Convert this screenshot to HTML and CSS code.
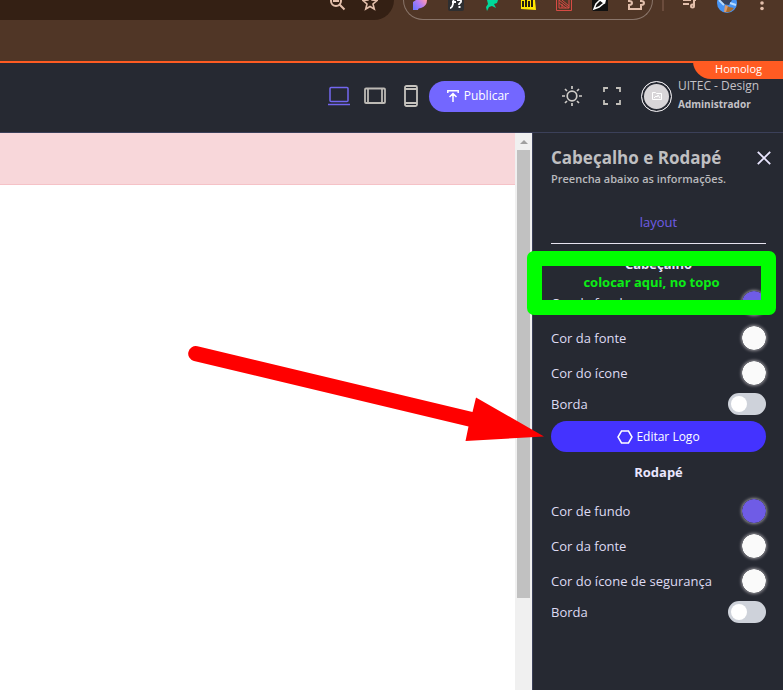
FILE: index.html
```html
<!DOCTYPE html>
<html lang="pt-BR">
<head>
<meta charset="utf-8">
<title>Cabeçalho e Rodapé</title>
<link rel="stylesheet" href="styles.css">
</head>
<body>
<div class="chrome">
  <div class="address">
    <svg width="18" height="20" viewBox="0 0 18 20" fill="none" stroke="#e3bfab" stroke-width="2"><circle cx="7" cy="1" r="5"/><path d="M10 4l5.500 5.500M4 1h6"/></svg>
    <svg width="16" height="20" viewBox="0 0 16 20" fill="none" stroke="#e3bfab" stroke-width="1.600"><path d="M8-5l2 5 5 .5-4 3.500 1.300 5L8 6.500 3.700 9 5 4 1 .5 6 0z"/></svg>
  </div>
  <div class="extensions">
    <svg width="16" height="20" viewBox="0 0 16 20"><defs><linearGradient id="g" gradientUnits="userSpaceOnUse" x1="3" y1="9" x2="14" y2="0"><stop stop-color="#7377ff"/><stop offset=".5" stop-color="#b67df0"/><stop offset="1" stop-color="#ff9ab0"/></linearGradient></defs><path fill="url(#g)" d="M1 10V2l3-2h11q0 6-6 8-3 0-3 2z"/></svg>
    <svg width="16" height="20" viewBox="0 0 16 20"><path fill="#2e2f31" d="M0 0h16v9q0 2-2 2H2q-2 0-2-2z"/><path fill="none" stroke="#fff" stroke-width="1.800" d="M2 8q3 0 3.500-8M4 2h4M9 0h4v2l-2 2v1M10.500 7h2"/></svg>
    <svg width="16" height="20" viewBox="0 0 16 20"><path fill="#00d99a" d="M3 0h11l-1 3-3 1 2 4-4-2-3 1-2 4-1-4 2-3z"/></svg>
    <svg width="16" height="20" viewBox="0 0 16 20"><path fill="#ffe600" d="M1 0h14l1 10-15-1z"/><path stroke="#231d10" stroke-width="2" fill="none" d="M3 1v6M6 0v7M9 1v6M12 0v7"/></svg>
    <svg width="16" height="20" viewBox="0 0 16 20" fill="none" stroke="#d84b44"><path d="M.5 0v10.500h15V0M3 0v8h10V0M3 0l10 8M6 0l7 6M3 3l7 5M6 8V4"/></svg>
    <svg width="16" height="20" viewBox="0 0 16 20"><path fill="#111" d="M0 0h16v11H1l-1-1z"/><path d="M2 9l2-5 4-4 4 3-5 4z" fill="none" stroke="#fff" stroke-width="1.500"/><path d="M8 0l5 4 1-4z" fill="#fff"/></svg>
    <svg width="17" height="20" viewBox="0 0 17 20" fill="none" stroke="#e3bfab" stroke-width="2"><path d="M1 0v1q3 0 3 2T1 5v4h12V5q3 0 3-2t-3-2V0"/></svg>
  </div>
  <span class="divider"></span>
  <div class="browser-tools">
    <svg width="16" height="20" viewBox="0 0 16 20" fill="none" stroke="#e3bfab" stroke-width="2"><path d="M1 0h8M1 4h6M12 6V0h2"/><circle cx="10.500" cy="6" r="1.500"/></svg>
    <svg width="20" height="20" viewBox="0 0 20 20"><circle cx="10" cy="3" r="10" fill="#4794f4"/><path fill="#38435d" d="M3 0h12l-3 5-7-1z"/><path fill="#a96c2b" d="M9 5l3 2 5 1q-3 5-9 4z"/><path fill="#d99b70" d="M8 5l3 1-2 6-2 0z"/><path stroke="#b8dcff" stroke-width="2" d="M2 0l5 5M13 3l6 2"/></svg>
    <svg width="4" height="20" viewBox="0 0 4 20" fill="#e3bfab"><circle cx="2" cy="3" r="1.800"/><circle cx="2" cy="8.500" r="1.800"/></svg>
  </div>
</div>

<header class="topbar">
  <span class="ribbon">Homolog</span>
  <nav class="devices" aria-label="Dispositivo">
    <button class="icon-button" aria-label="Computador"><svg width="22" height="20" viewBox="0 0 22 20" fill="none" stroke="#7367f0" stroke-width="1.500"><rect x="2" y="1.500" width="18" height="14" rx="1"/><path d="M0 18.500h22"/></svg></button>
    <button class="icon-button" aria-label="Tablet"><svg width="22" height="18" viewBox="0 0 22 18" fill="none" stroke="#bdbab5" stroke-width="1.800"><rect x="1" y="1.500" width="20" height="14.500" rx="1"/><path d="M4 1.500v14M18 1.500v14"/></svg></button>
    <button class="icon-button phone" aria-label="Celular"><svg width="14" height="22" viewBox="0 0 14 22" fill="none" stroke="#c6c3be" stroke-width="1.800"><rect x="1" y="1" width="12" height="20" rx="1.500"/><path d="M1 4h12M1 18h12"/></svg></button>
    <button class="publish"><svg width="12" height="12" viewBox="0 0 12 12" fill="none" stroke="#fff" stroke-width="1.500"><path d="M.8 3V.8h10.400V3M6 12V3.500M2.500 7L6 3.500 9.500 7"/></svg>Publicar</button>
  </nav>
  <div class="account">
    <button class="icon-button" aria-label="Tema"><svg width="22" height="22" viewBox="0 0 22 22" fill="none" stroke="#cfccc8" stroke-width="1.700"><circle cx="11" cy="11" r="4.800"/><path d="M11 1v3M11 18v3M1 11h3M18 11h3M4 4l2 2M16 16l2 2M4 18l2-2M16 6l2-2"/></svg></button>
    <button class="icon-button" aria-label="Tela cheia"><svg width="18" height="18" viewBox="0 0 18 18" fill="none" stroke="#c2bfba" stroke-width="1.800"><path d="M1 5V1h4M13 1h4v4M17 13v4h-4M5 17H1v-4"/></svg></button>
    <span class="avatar"><svg width="10" height="10" viewBox="0 0 10 10" fill="none" stroke="#fff"><path d="M.5 8.500v-7h3l1 1h5v6zM2 7l2-2 1 1 1-2 2 3"/></svg></span>
    <div class="user"><span class="user-name">UITEC - Design</span><strong class="user-role">Administrador</strong></div>
  </div>
</header>

<main class="workspace">
  <section class="canvas"><div class="notice"></div></section>
  <div class="scrollbar"><svg class="up" width="8" height="4" viewBox="0 0 8 4"><path d="M0 4l4-4 4 4z" fill="#a0a0a0"/></svg><div class="thumb"></div></div>
  <aside class="panel">
    <div class="panel-head">
      <h1>Cabeçalho e Rodapé</h1>
      <button class="icon-button" aria-label="Fechar"><svg width="14" height="14" viewBox="0 0 14 14" stroke="#eae6ff" stroke-width="1.800"><path d="M.8.8l12.400 12.400M13.200.8L.8 13.200"/></svg></button>
    </div>
    <p class="subtitle">Preencha abaixo as informações.</p>
    <a class="tab" href="#layout">layout</a>
    <section id="layout">
      <h2>Cabeçalho</h2>
      <div class="row"><label for="h-bg">Cor de fundo</label><input class="swatch" id="h-bg" type="color" value="#6f5ce6"></div>
      <div class="row"><label for="h-font">Cor da fonte</label><input class="swatch" id="h-font" type="color" value="#fafafa"></div>
      <div class="row"><label for="h-icon">Cor do ícone</label><input class="swatch" id="h-icon" type="color" value="#fafafa"></div>
      <div class="row row-toggle"><label for="h-border">Borda</label><input class="toggle" id="h-border" type="checkbox"></div>
      <button class="edit-logo"><svg width="16" height="14" viewBox="0 0 16 14" fill="none" stroke="#fff" stroke-width="1.500"><path d="M4.500 1h7L15 7l-3.500 6h-7L1 7z"/></svg>Editar Logo</button>
    </section>
    <section>
      <h2>Rodapé</h2>
      <div class="row"><label for="f-bg">Cor de fundo</label><input class="swatch" id="f-bg" type="color" value="#6f5ce6"></div>
      <div class="row"><label for="f-font">Cor da fonte</label><input class="swatch" id="f-font" type="color" value="#fafafa"></div>
      <div class="row"><label for="f-icon">Cor do ícone de segurança</label><input class="swatch" id="f-icon" type="color" value="#fafafa"></div>
      <div class="row row-toggle"><label for="f-border">Borda</label><input class="toggle" id="f-border" type="checkbox"></div>
    </section>
    <div class="mark">colocar aqui, no topo</div>
    <svg class="arrow" width="356" height="98" viewBox="188 344 356 98" fill="#f00"><path d="M197.500 346.300L472.500 412 476 397.500 544 436.500 465.500 441 468.500 426.500 194 361A7.500 7.500 0 0 1 197.500 346.300z"/></svg>
  </aside>
</main>
</body>
</html>
```

FILE: styles.css
```css
* { box-sizing: border-box; }

body {
  margin: 0;
  min-height: 100vh;
  display: flex;
  flex-direction: column;
  overflow: hidden;
  font: 13px/20px "Open Sans", "Noto Sans", sans-serif;
  color: #dedbf2;
  background: #262932;
}

button { font: inherit; color: #fff; border: 0; padding: 0; cursor: pointer; }
svg { display: block; flex: none; }
h1, h2, p { margin: 0; }

.icon-button { background: none; }

/* Browser strip */
.chrome {
  height: 61px;
  display: flex;
  align-items: flex-start;
  background: #503626;
}
.address {
  flex: 1;
  height: 20px;
  display: flex;
  justify-content: flex-end;
  gap: 15px;
  padding-right: 16px;
  background: #342014;
  border-bottom-right-radius: 20px;
}
.extensions {
  height: 20px;
  display: flex;
  gap: 20px;
  margin-left: 9px;
  padding: 0 7px 0 8px;
  border: 1px solid #89756a;
  border-top: 0;
  border-radius: 0 0 20px 20px;
}
.divider { width: 2px; height: 11px; margin-left: 9px; background: #6b4c3c; }
.browser-tools { display: flex; gap: 19px; padding: 0 19px 0 18px; }
.browser-tools svg:last-child { margin-left: 4px; }

/* Top bar */
.topbar {
  position: relative;
  height: 72px;
  display: flex;
  justify-content: flex-end;
  align-items: center;
  gap: 36px;
  padding: 0 21px 3px 0;
  border-top: 2px solid #ff5b22;
  border-bottom: 1px solid #3b4059;
}
.devices, .account { display: flex; align-items: center; }
.devices { gap: 14px; }
.devices .phone { margin: 0 -3px 0 4px; }
.publish {
  height: 31px;
  display: flex;
  align-items: center;
  gap: 5px;
  padding: 0 16px 0 18px;
  border-radius: 16px;
  background: #7367ff;
  font-size: 12px;
}
.account { gap: 20px; }
.ribbon {
  position: absolute;
  top: -2px;
  right: 0;
  height: 18px;
  padding: 0 21px 0 22px;
  border-bottom-left-radius: 18px;
  background: #ff5b22;
  color: #fff;
  font-size: 11px;
  line-height: 16px;
}
.avatar {
  width: 31px;
  height: 31px;
  display: grid;
  place-items: center;
  border: 1px solid #e8e6ea;
  border-radius: 50%;
  background: #d8d5d8;
  box-shadow: inset 0 0 0 2px #262932;
}
.user {
  display: flex;
  flex-direction: column;
  min-width: 84px;
  margin-left: -14px;
  padding-bottom: 2px;
  color: #c4c2c7;
}
.user-name { font-size: 12px; line-height: 18px; }
.user-role { font-size: 10px; line-height: 18px; }

/* Workspace */
.workspace { flex: 1; display: flex; }
.canvas { flex: 1; background: #fff; }
.notice { height: 52px; background: #f8d7da; border-bottom: 1px solid #f5c2c7; }
.scrollbar { width: 17px; padding: 0 2px; background: #f0f0f0; }
.up { margin: 7px auto 6px; }
.thumb { height: 448px; background: #c1c1c1; }

.panel {
  position: relative;
  width: 251px;
  padding: 13px 17px 0 18px;
  border-left: 1px solid #3b4059;
}
.panel-head {
  display: flex;
  justify-content: space-between;
  align-items: center;
  margin-right: -5px;
}
h1 { font-size: 17px; line-height: 24px; color: #bfbfc1; font-weight: 700; }
.subtitle { font-size: 11px; line-height: 18px; color: #b9b9bd; font-weight: 600; }
.tab {
  display: block;
  margin-top: 12px;
  padding: 12px 0 11px;
  border-bottom: 1px solid #e6e3ef;
  color: #6f5ce6;
  text-align: center;
  text-decoration: none;
}
h2 { font-size: 13px; line-height: 41px; color: #eae6ff; text-align: center; }
.row { height: 35px; display: flex; align-items: center; justify-content: space-between; }
.row-toggle { height: 27px; }

.swatch {
  appearance: none;
  width: 24px;
  height: 24px;
  padding: 0;
  border: 0;
  border-radius: 50%;
  background: none;
  box-shadow: 0 0 3px 1px #918f95;
}
.swatch::-webkit-color-swatch-wrapper { padding: 0; }
.swatch::-webkit-color-swatch { border: 0; border-radius: 50%; }

.toggle {
  appearance: none;
  width: 38px;
  height: 22px;
  margin: 0;
  padding: 3px;
  border-radius: 11px;
  background: #ced2da;
}
.toggle::before {
  content: "";
  display: block;
  width: 16px;
  height: 16px;
  border-radius: 50%;
  background: #fff;
}
.toggle:checked::before { margin-left: auto; }

.edit-logo {
  width: 100%;
  height: 31px;
  display: flex;
  align-items: center;
  justify-content: center;
  gap: 3px;
  margin-top: 4px;
  border-radius: 16px;
  background: #4433ff;
  font-size: 12px;
}

/* Review marks over the panel */
.mark {
  position: absolute;
  top: 118px;
  left: -6px;
  right: 7px;
  height: 64px;
  border: 15px solid #0f0;
  border-radius: 7px;
  color: #0ced16;
  font-weight: 700;
  line-height: 32px;
  text-align: center;
}
.arrow { position: absolute; top: 211px; right: 239px; }
```
